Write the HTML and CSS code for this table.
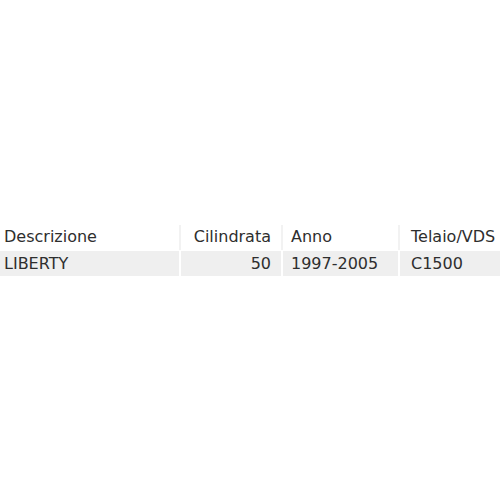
FILE: index.html
```html
<!DOCTYPE html>
<html>
<head>
<meta charset="utf-8">
<link rel="stylesheet" href="styles.css">
</head>
<body>
<div class="page">
  <div class="grid">
    <div class="row head">
      <div class="cell c1">Descrizione</div>
      <div class="cell c2 num">Cilindrata</div>
      <div class="cell c3">Anno</div>
      <div class="cell c4">Telaio/VDS</div>
    </div>
    <div class="row data">
      <div class="cell c1">LIBERTY</div>
      <div class="cell c2 num">50</div>
      <div class="cell c3">1997-2005</div>
      <div class="cell c4">C1500</div>
    </div>
  </div>
</div>
</body>
</html>
```
FILE: styles.css
```css
html, body {
  margin: 0;
  padding: 0;
  background: #ffffff;
}
.page {
  width: 500px;
  height: 500px;
  overflow: hidden;
  padding-top: 224px;
  box-sizing: border-box;
}
.grid {
  display: flex;
  flex-direction: column;
  gap: 1px;
  font-family: "DejaVu Sans", sans-serif;
  font-size: 16px;
  color: #2e2e2e;
}
.row {
  display: flex;
  gap: 2px;
  width: 520px;
}
.head {
  background: #f2f2f2;
  height: 25px;
  margin-top: 1px;
}
.head .cell {
  background: #ffffff;
  padding-bottom: 3px;
}
.data .cell {
  background: #efefef;
}
.data {
  height: 25px;
}
.cell {
  box-sizing: border-box;
  display: flex;
  align-items: center;
  padding: 0 5px;
  white-space: nowrap;
}
.c1 { width: 179px; padding-left: 4px; }
.c2 { width: 100px; justify-content: flex-end; padding-right: 10px; }
.c3 { width: 115px; padding-left: 8px; }
.c4 { width: 120px; padding-left: 11px; }
```
